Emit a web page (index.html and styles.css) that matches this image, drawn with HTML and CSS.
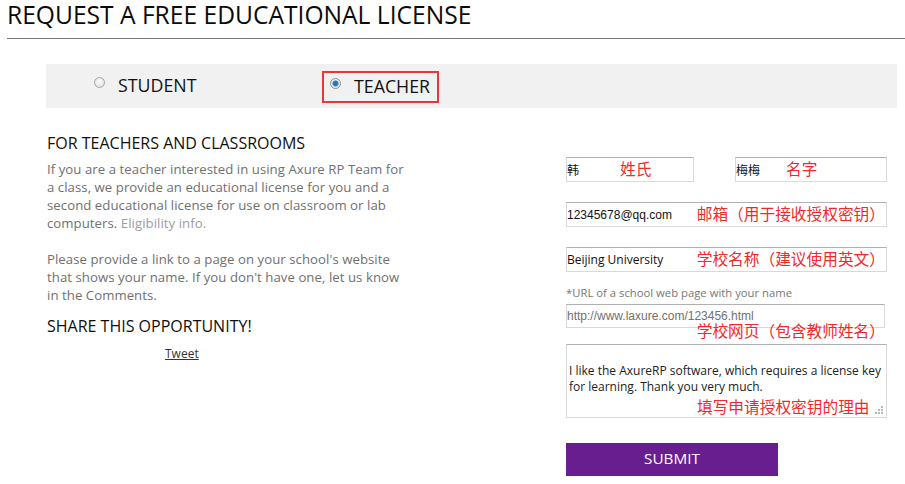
FILE: index.html
```html
<!DOCTYPE html>
<html>
<head>
<meta charset="utf-8">
<link rel="stylesheet" href="styles.css">
</head>
<body>
<div class="page">
  <h1 class="title">REQUEST A FREE EDUCATIONAL LICENSE</h1>
  <div class="rule"></div>
  <div class="band">
    <label class="choice choice-student"><span class="radio"></span><span>STUDENT</span></label>
    <label class="choice choice-teacher"><span class="radio radio-on"></span><span>TEACHER</span></label>
  </div>
  <div class="columns">
    <div class="left">
      <h2 class="sub">FOR TEACHERS AND CLASSROOMS</h2>
      <p class="para">If you are a teacher interested in using Axure RP Team for a class, we provide an educational license for you and a second educational license for use on classroom or lab computers. <span class="muted">Eligibility info.</span></p>
      <p class="para">Please provide a link to a page on your school's website that shows your name. If you don't have one, let us know in the Comments.</p>
      <h2 class="sub sub-share">SHARE THIS OPPORTUNITY!</h2>
      <div class="tweet-row"><a class="tweet">Tweet</a></div>
    </div>
    <div class="right">
      <div class="row-names">
        <div class="field field-first"><span class="val">韩</span><span class="note note-first">姓氏</span></div>
        <div class="field field-last"><span class="val">梅梅</span><span class="note note-last">名字</span></div>
      </div>
      <div class="field field-wide"><span class="val val-arial">12345678@qq.com</span><span class="note note-right">邮箱（用于接收授权密钥）</span></div>
      <div class="field field-wide field-school"><span class="val">Beijing University</span><span class="note note-right">学校名称（建议使用英文）</span></div>
      <div class="label">*URL of a school web page with your name</div>
      <div class="field field-url"><span class="val val-gray">http://www.laxure.com/123456.html</span><span class="note note-below">学校网页（包含教师姓名）</span></div>
      <div class="textarea">
        <p class="ta-text">I like the AxureRP software, which requires a license key for learning. Thank you very much.</p>
        <span class="note note-ta">填写申请授权密钥的理由</span>
        <svg class="grip" width="8" height="8" viewBox="0 0 8 8"><g fill="#b9b9b9"><rect x="6" y="0" width="2" height="2"/><rect x="3" y="3" width="2" height="2"/><rect x="6" y="3" width="2" height="2"/><rect x="0" y="6" width="2" height="2"/><rect x="3" y="6" width="2" height="2"/><rect x="6" y="6" width="2" height="2"/></g></svg>
      </div>
      <button class="submit">SUBMIT</button>
    </div>
  </div>
</div>
</body>
</html>
```
FILE: styles.css
```css
html, body {
  margin: 0;
  padding: 0;
  background: #ffffff;
}
body {
  font-family: "Open Sans", "Noto Sans CJK SC", sans-serif;
  color: #111;
}
.page {
  width: 905px;
  height: 484px;
  overflow: hidden;
}
.title {
  margin: 0;
  padding: 0 0 0 7px;
  height: 38px;
  box-sizing: border-box;
  font-size: 24.6px;
  font-weight: 400;
  line-height: 30px;
  color: #0a0a0a;
  white-space: nowrap;
}
.rule {
  margin-left: 7px;
  border-top: 1px solid #777;
  height: 0;
}
.band {
  margin: 25px 8px 0 46px;
  height: 44px;
  background: #f1f1f1;
  display: flex;
  align-items: center;
}
.choice {
  display: flex;
  align-items: center;
  font-size: 17.8px;
  color: #111;
  box-sizing: border-box;
}
.choice-student {
  margin-left: 48px;
  width: 228px;
  margin-top: -2px;
}
.choice-teacher {
  border: 2px solid #ee3434;
  height: 32px;
  width: 117px;
  padding-left: 6px;
  padding-bottom: 2px;
  margin-top: 2px;
}
.radio {
  width: 9px;
  height: 9px;
  border-radius: 50%;
  border: 1px solid #a4a4a4;
  background: radial-gradient(circle at 50% 40%, #fbfbfb, #dcdcdc);
  margin-right: 13px;
  margin-top: -5px;
  flex: none;
}
.radio-on {
  background: radial-gradient(circle, #1c6aa7 0, #2b86c9 2.5px, #e6e6e6 3.5px, #f6f6f6 5px);
  border-color: #8e8e8e;
}
.columns {
  display: flex;
  padding-left: 47px;
}
.left {
  width: 363px;
  padding-top: 24px;
}
.sub {
  margin: 0;
  font-size: 16px;
  font-weight: 400;
  line-height: 22px;
  color: #0f0f0f;
}
.para {
  margin: 6px 0 18px 0;
  font-size: 13.2px;
  line-height: 18px;
  color: #707070;
  letter-spacing: 0.05px;
}
.muted {
  color: #9c9ca4;
}
.sub-share {
  margin-top: -7px;
}
.tweet-row {
  padding-left: 118px;
  padding-top: 4px;
}
.tweet {
  font-size: 12px;
  color: #333;
  text-decoration: underline;
}
.right {
  margin-left: 156px;
  width: 321px;
  padding-top: 49px;
}
.row-names {
  display: flex;
  justify-content: space-between;
}
.field {
  position: relative;
  box-sizing: border-box;
  height: 25px;
  border: 1px solid #d8d8de;
  border-top-color: #b0b0b0;
  display: flex;
  align-items: center;
  font-size: 12px;
  color: #111;
}
.field-first {
  width: 128px;
}
.field-last {
  width: 152px;
}
.field-wide {
  width: 321px;
  margin-top: 20px;
}
.val-arial {
  font-family: "Liberation Sans", sans-serif;
  font-size: 12px;
}
.val-gray {
  font-family: "Liberation Sans", sans-serif;
  font-size: 12px;
  color: #707070;
}
.note {
  position: absolute;
  color: #f0292a;
  font-family: "Noto Sans CJK SC", sans-serif;
  font-size: 15.7px;
  line-height: 18px;
  white-space: nowrap;
}
.note-first {
  left: 53px;
  top: 2px;
}
.note-last {
  left: 50px;
  top: 2px;
}
.note-right {
  right: 1px;
  top: 2px;
}
.note-below {
  right: -1px;
  top: 17px;
}
.label {
  margin-top: 14px;
  font-size: 11.3px;
  color: #777;
  height: 18px;
  line-height: 14px;
}
.field-url {
  width: 319px;
  height: 24px;
}
.textarea {
  position: relative;
  margin-top: 16px;
  width: 321px;
  height: 74px;
  box-sizing: border-box;
  border: 1px solid #d8d8de;
  border-top-color: #b0b0b0;
}
.ta-text {
  margin: 0;
  padding: 18px 0 0 2px;
  font-size: 12px;
  line-height: 16px;
  color: #222;
}
.note-ta {
  left: 130px;
  top: 53px;
}
.grip {
  position: absolute;
  right: 3px;
  bottom: 3px;
}
.submit {
  display: block;
  margin-top: 25px;
  width: 212px;
  height: 33px;
  border: 0;
  background: #681e8e;
  color: #ffffff;
  font-family: "Open Sans", sans-serif;
  font-size: 15.3px;
  padding: 0 0 3px 0;
}
```
